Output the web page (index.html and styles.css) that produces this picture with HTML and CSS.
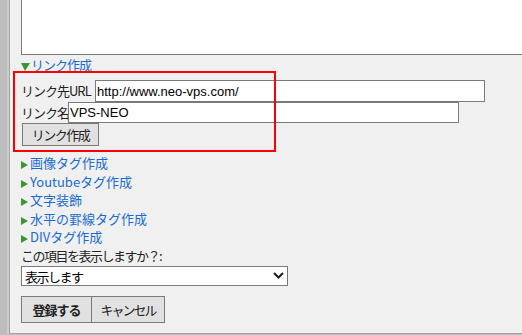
FILE: index.html
```html
<!DOCTYPE html>
<html lang="ja">

<head>
  <meta charset="UTF-8">
  <title>リンク作成</title>
  <link rel="stylesheet" href="styles.css">
</head>

<body>

  <div class="frame">
    <div class="panel">
      <textarea class="editor"></textarea>

      <a class="toggle open" href="#">リンク作成</a>

      <form class="link-form">
        <div class="row row-url">
          <label for="url">リンク先URL</label>
          <input type="text" id="url" class="url" value="http://www.neo-vps.com/">
        </div>
        <div class="row row-name">
          <label for="name">リンク名</label>
          <input type="text" id="name" class="name" value="VPS-NEO">
        </div>
        <button type="button" class="btn small-btn">リンク作成</button>
      </form>

      <ul class="tools">
        <li><a class="toggle" href="#">画像タグ作成</a></li>
        <li><a class="toggle" href="#">Youtubeタグ作成</a></li>
        <li><a class="toggle" href="#">文字装飾</a></li>
        <li><a class="toggle" href="#">水平の罫線タグ作成</a></li>
        <li><a class="toggle" href="#">DIVタグ作成</a></li>
      </ul>

      <p class="question">この項目を表示しますか？:</p>

      <div class="select-wrap">
        <select class="visible">
          <option>表示します</option>
          <option>表示しません</option>
        </select>
        <svg class="chevron" width="11" height="7" viewBox="0 0 11 7">
          <path d="M1 1 L5.5 5.5 L10 1" fill="none" stroke="#1c1c28" stroke-width="2" />
        </svg>
      </div>

      <div class="actions">
        <button type="button" class="btn primary">登録する</button><button type="button" class="btn cancel">キャンセル</button>
      </div>
    </div>

    <!-- 赤枠 -->
    <div class="highlight"></div>
  </div>

</body>

</html>
```

FILE: styles.css
```css
html,
body {
  margin: 0;
  height: 100%;
  overflow: hidden;
}

body {
  background-color: #bdbdbd;
  font-family: "Noto Sans CJK JP", "Liberation Sans", sans-serif;
  font-size: 13px;
  color: #222;
}

.frame {
  position: relative;
  padding-left: 9px;
}

.panel {
  display: flow-root;
  background: #f0f0f0;
  border-left: 1px solid #a3a3a3;
  border-bottom: 1px solid #a3a3a3;
  box-shadow: -2px 0 0 #cdcdcd;
  padding: 0 0 10px 11px;
}

.editor {
  display: block;
  box-sizing: border-box;
  width: 520px;
  height: 65px;
  margin: -10px 0 0 0;
  border: 1px solid #7a7a7a;
  background: #fff;
  resize: none;
}

a {
  color: #1a6bd0;
  text-decoration: none;
}

.toggle {
  display: block;
  line-height: 18.5px;
}

.toggle::before {
  content: "";
  display: inline-block;
  border-left: 7px solid #3a9632;
  border-top: 4px solid transparent;
  border-bottom: 4px solid transparent;
  margin-right: 2px;
  vertical-align: -1px;
}

.toggle.open {
  margin-top: 1px;
  line-height: 18px;
  letter-spacing: -1px;
}

.toggle.open::before {
  border-left: 4px solid transparent;
  border-right: 5px solid transparent;
  border-top: 8px solid #3a9632;
  border-bottom: none;
  margin-right: 1px;
}

.link-form {
  margin: 6px 0 0;
}

.row {
  display: flex;
  align-items: center;
}

.row label {
  flex: none;
  line-height: 18px;
  white-space: nowrap;
  letter-spacing: -1px;
}

.row-url label {
  width: 74px;
}

.row-name label {
  width: 47px;
}

input {
  box-sizing: border-box;
  margin: 0;
  padding: 0 1px;
  border: 1px solid #7a7a7a;
  background: #fff;
  color: #000;
  font: 13px "Liberation Sans", Arial, sans-serif;
}

.url {
  width: 390px;
  height: 22px;
}

.name {
  width: 391px;
  height: 21px;
}

.btn {
  box-sizing: border-box;
  margin: 0;
  padding: 0;
  border: 1px solid #7a7a7a;
  background: #e1e1e1;
  color: #222;
  font-family: "Noto Sans CJK JP", sans-serif;
  font-size: 13px;
}

.small-btn {
  display: block;
  width: 77px;
  height: 23px;
  margin-left: 1px;
  letter-spacing: -1.5px;
}

.tools {
  list-style: none;
  margin: 8px 0 0;
  padding: 0;
}

.question {
  margin: 0;
  line-height: 18px;
  letter-spacing: -1.5px;
}

.select-wrap {
  position: relative;
  width: 267px;
  margin-top: 1px;
}

.visible {
  display: block;
  box-sizing: border-box;
  width: 267px;
  height: 20px;
  margin: 0;
  padding: 0 0 0 3px;
  appearance: none;
  border: 1px solid #7a7a7a;
  border-radius: 0;
  background: #fff;
  color: #000;
  font-family: "Noto Sans CJK JP", sans-serif;
  font-size: 13px;
  letter-spacing: -1.5px;
}

.chevron {
  position: absolute;
  left: 252px;
  top: 6px;
  pointer-events: none;
}

.actions {
  display: flex;
  margin-top: 10px;
}

.actions .btn {
  height: 27px;
}

.primary {
  width: 71px;
  font-weight: bold;
  letter-spacing: -1px;
}

.cancel {
  width: 73px;
  border-left: none;
  letter-spacing: -2px;
}

.highlight {
  position: absolute;
  left: 13px;
  top: 71px;
  box-sizing: border-box;
  width: 263px;
  height: 81px;
  border: 2px solid #ff0000;
}
```
